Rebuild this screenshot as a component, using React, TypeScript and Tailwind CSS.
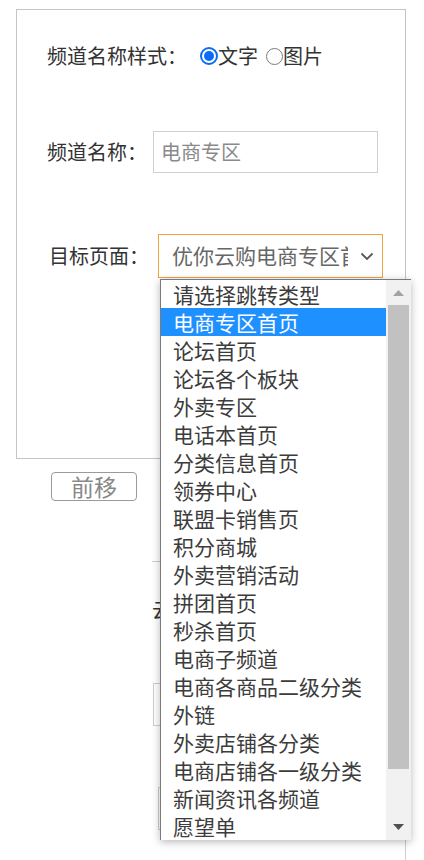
import React from "react";

const items = [
  "请选择跳转类型",
  "电商专区首页",
  "论坛首页",
  "论坛各个板块",
  "外卖专区",
  "电话本首页",
  "分类信息首页",
  "领券中心",
  "联盟卡销售页",
  "积分商城",
  "外卖营销活动",
  "拼团首页",
  "秒杀首页",
  "电商子频道",
  "电商各商品二级分类",
  "外链",
  "外卖店铺各分类",
  "电商店铺各一级分类",
  "新闻资讯各频道",
  "愿望单",
];

const font = {
  fontFamily: '"Microsoft YaHei", "Noto Sans CJK SC", "Noto Sans", sans-serif',
};

export default function App() {
  return (
    <div
      className="relative w-[424px] h-[860px] overflow-hidden bg-white text-[#333]"
      style={font}
    >
      {/* main panel */}
      <div className="ml-[16px] mt-[9px] w-[390px] h-[450px] border border-[#c4c4c4] pl-[30px] pt-[26px]">
        <div className="flex items-center h-[40px] text-[20px]">
          <span className="w-[140px] whitespace-nowrap">频道名称样式：</span>
          <label className="flex items-center ml-[13px]">
            <span className="w-[18px] h-[18px] rounded-full border-[2px] border-[#0b6cf5] flex items-center justify-center">
              <span className="w-[10px] h-[10px] rounded-full bg-[#0b6cf5]" />
            </span>
            <span>文字</span>
          </label>
          <label className="flex items-center ml-[8px]">
            <span className="w-[17px] h-[17px] rounded-full border border-[#7a7a7a]" />
            <span>图片</span>
          </label>
        </div>

        <div className="flex items-center mt-[55px] h-[42px] text-[20px]">
          <span className="w-[106px] whitespace-nowrap">频道名称：</span>
          <div className="w-[225px] h-[42px] border border-[#cfcfcf] flex items-center pl-[7px] text-[20px] text-[#8a8a8a]">
            电商专区
          </div>
        </div>

        <div className="flex items-center mt-[61px] h-[44px] text-[20px]">
          <span className="pl-[2px] w-[111px] whitespace-nowrap">目标页面：</span>
          <div className="w-[225px] h-[44px] border border-[#f3a040] flex items-center pl-[13px] pr-[8px]">
            <span className="w-[176px] overflow-hidden whitespace-nowrap text-[21px] text-[#666]">
              优你云购电商专区首页
            </span>
            <svg
              className="ml-auto"
              width="14"
              height="14"
              viewBox="0 0 14 14"
              fill="none"
              stroke="#555"
              strokeWidth="1.8"
            >
              <path d="M1.5 4.5 L7 10 L12.5 4.5" />
            </svg>
          </div>
        </div>
      </div>

      {/* button */}
      <div className="ml-[51px] mt-[13px] w-[86px] h-[29px] border border-[#9a9a9a] rounded-[4px] flex items-center justify-center text-[23px] leading-none text-[#888]">
        前移
      </div>

      {/* partially hidden content underneath */}
      <div className="ml-[152px] mt-[60px] w-[254px] h-[300px] border-t border-r border-[#cfcfcf]">
        <div className="mt-[38px] text-[20px] leading-[20px] whitespace-nowrap">云</div>
        <div className="ml-[1px] mt-[63px] w-[225px] h-[43px] border border-[#cfcfcf]" />
        <div className="ml-[6px] mt-[61px] w-[225px] h-[43px] border border-[#cfcfcf]" />
      </div>

      {/* dropdown list (overlay) */}
      <div className="absolute left-[160px] top-[279px] w-[251px] h-[561px] flex bg-white border-l border-t border-[#7a7a7a] shadow-[0_2px_8px_rgba(0,0,0,0.28)]">
        <div className="w-[225px]">
          {items.map((t, i) => (
            <div
              key={t}
              className={
                i === 1
                  ? "h-[28px] leading-[28px] pl-[12px] text-[21px] whitespace-nowrap bg-[#1e90ff] text-white"
                  : "h-[28px] leading-[28px] pl-[12px] text-[21px] whitespace-nowrap text-[#3c3c3c]"
              }
            >
              {t}
            </div>
          ))}
        </div>
        <div className="w-[25px] bg-[#f1f1f1] flex flex-col items-center">
          <div className="h-[25px] w-full flex items-center justify-center">
            <svg width="11" height="6" viewBox="0 0 11 6">
              <path d="M0 6 L5.5 0 L11 6 Z" fill="#a3a3a3" />
            </svg>
          </div>
          <div className="w-[21px] h-[464px] bg-[#c1c1c1]" />
          <div className="flex-1 w-full flex items-end justify-center pb-[10px]">
            <svg width="11" height="6" viewBox="0 0 11 6">
              <path d="M0 0 L11 0 L5.5 6 Z" fill="#505050" />
            </svg>
          </div>
        </div>
      </div>
    </div>
  );
}
